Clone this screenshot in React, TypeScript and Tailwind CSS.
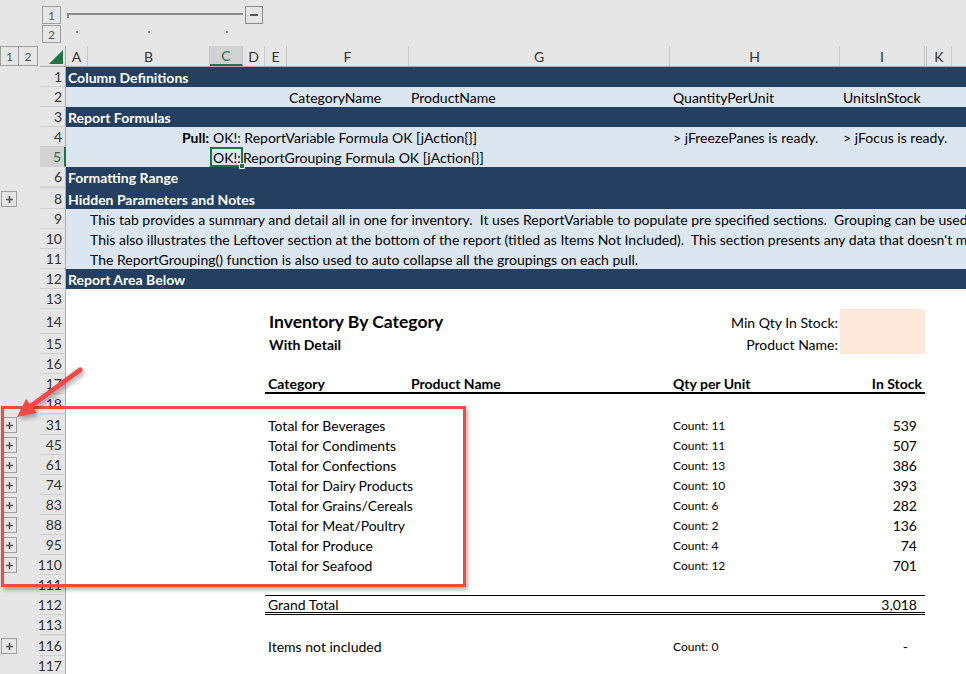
import type { ReactNode } from 'react'

// column tracks A..L (J is hidden, shown as a 2px sliver)
const COLS = 'grid grid-cols-[22px_122px_33px_22px_22px_122px_261px_170px_85px_2px_25px_14px]'

const DARK = 'bg-[#243f60]'
const LIGHT = 'bg-[#dce6f1]'

function PlusBox() {
  return (
    <div className="w-[16px] h-[16px] border border-[#9e9e9e] flex items-center justify-center text-[#555] leading-none">
      <svg width="9" height="9" viewBox="0 0 9 9"><path d="M4.5 1v7M1 4.5h7" stroke="#555" strokeWidth="1.6" /></svg>
    </div>
  )
}

type RowProps = { n: number; h?: string; bg?: string; plus?: boolean; sel?: boolean; children?: ReactNode }

function Row({ n, h = 'h-[20px]', bg = 'bg-white', plus, sel, children }: RowProps) {
  return (
    <div className={`flex ${h}`}>
      <div className="w-[40px] shrink-0 flex items-center pl-[1px]">{plus && <PlusBox />}</div>
      <div
        className={`w-[26px] shrink-0 flex items-center justify-end pr-[3px] border-b border-[#cfcfcf] text-[14px] ${
          sel ? 'bg-[#d2d2d2] text-[#217346] border-r-2 border-r-[#217346]' : 'text-[#333] border-r border-r-[#ababab]'
        }`}
      >
        {n}
      </div>
      <div className={`flex-1 ${COLS} grid-rows-1 ${bg}`}>{children}</div>
    </div>
  )
}

function Gap({ h, bg }: { h: string; bg: string }) {
  return (
    <div className={`flex ${h}`}>
      <div className="w-[40px] shrink-0" />
      <div className="w-[26px] shrink-0 border-r border-[#ababab] bg-[#d6d6d6]" />
      <div className={`flex-1 ${bg}`} />
    </div>
  )
}

function Section({ n, title, plus }: { n: number; title: string; plus?: boolean }) {
  return (
    <Row n={n} bg={DARK} plus={plus}>
      <div className="row-start-1 col-start-1 flex items-center pl-[2px] whitespace-nowrap font-bold text-white">{title}</div>
    </Row>
  )
}

const totals = [
  { n: 31, name: 'Beverages', count: 11, stock: '539' },
  { n: 45, name: 'Condiments', count: 11, stock: '507' },
  { n: 61, name: 'Confections', count: 13, stock: '386' },
  { n: 74, name: 'Dairy Products', count: 10, stock: '393' },
  { n: 83, name: 'Grains/Cereals', count: 6, stock: '282' },
  { n: 88, name: 'Meat/Poultry', count: 2, stock: '136' },
  { n: 95, name: 'Produce', count: 4, stock: '74' },
  { n: 110, name: 'Seafood', count: 12, stock: '701' },
]

const colHeads = ['A', 'B', 'C', 'D', 'E', 'F', 'G', 'H', 'I', '', 'K', '']

export default function App() {
  return (
    <div className="relative w-[966px] h-[674px] overflow-hidden bg-[#e6e6e6] text-[14px] leading-[17px] text-black [font-family:Lato,'Liberation_Sans',sans-serif]">
      {/* column outline levels */}
      <div className="flex h-[46px]">
        <div className="w-[42px] shrink-0" />
        <div className="w-[24px] shrink-0 flex flex-col gap-[1px] pt-[6px]">
          <div className="w-[19px] h-[18px] border border-[#9e9e9e] flex items-center justify-center text-[12px] text-[#555]">1</div>
          <div className="w-[19px] h-[18px] border border-[#9e9e9e] flex items-center justify-center text-[12px] text-[#555]">2</div>
        </div>
        <div className={`flex-1 ${COLS} grid-rows-[24px_22px]`}>
          <div className="row-start-1 col-start-1 col-span-3 pt-[13px] pl-[1px]">
            <div className="h-[5px] border-t-2 border-l-2 border-[#8a8a8a]" />
          </div>
          <div className="row-start-1 col-start-4 pt-[6px] pl-[2px]">
            <div className="w-[18px] h-[18px] border border-[#8a8a8a] flex items-center justify-center">
              <div className="w-[8px] h-[2px] bg-[#555]" />
            </div>
          </div>
          {[1, 2, 3].map((c) => (
            <div key={c} className={`row-start-2 ${c === 1 ? 'col-start-1' : c === 2 ? 'col-start-2' : 'col-start-3'} flex justify-center pt-[7px]`}>
              <div className="w-[2px] h-[2px] bg-[#8a8a8a]" />
            </div>
          ))}
        </div>
      </div>

      {/* column headers */}
      <div className="flex h-[21px]">
        <div className="w-[40px] shrink-0 flex">
          <div className="w-[19px] h-[20px] border border-[#9e9e9e] flex items-center justify-center text-[12px] text-[#555]">1</div>
          <div className="w-[19px] h-[20px] border border-[#9e9e9e] border-l-0 flex items-center justify-center text-[12px] text-[#555]">2</div>
        </div>
        <div className="w-[26px] shrink-0 border-b border-r border-[#ababab] flex items-end justify-end p-[2px]">
          <svg width="14" height="14" viewBox="0 0 14 14"><polygon points="14,0 14,14 0,14" fill="#217346" /></svg>
        </div>
        <div className={`flex-1 ${COLS} grid-rows-1 border-b border-[#ababab]`}>
          {colHeads.map((c, i) => (
            <div
              key={i}
              className={`row-start-1 flex items-center justify-center border-r border-[#c8c8c8] text-[14px] ${
                c === 'C' ? 'bg-[#d2d2d2] text-[#217346] border-b-2 border-b-[#217346]' : 'text-[#333]'
              } ${i === 11 ? 'border-r-0' : ''}`}
            >
              {c}
            </div>
          ))}
        </div>
      </div>

      <Section n={1} title="Column Definitions" />
      <Row n={2} bg={LIGHT}>
        <div className="row-start-1 col-start-6 flex items-center pl-[2px] whitespace-nowrap">CategoryName</div>
        <div className="row-start-1 col-start-7 flex items-center pl-[2px] whitespace-nowrap">ProductName</div>
        <div className="row-start-1 col-start-8 flex items-center pl-[3px] whitespace-nowrap">QuantityPerUnit</div>
        <div className="row-start-1 col-start-9 flex items-center pl-[3px] whitespace-nowrap">UnitsInStock</div>
      </Row>
      <Section n={3} title="Report Formulas" />
      <Row n={4} bg={LIGHT}>
        <div className="row-start-1 col-start-2 flex items-center justify-end pr-[1px] font-bold">Pull:</div>
        <div className="row-start-1 col-start-3 flex items-center pl-[3px] whitespace-nowrap">OK!: ReportVariable Formula OK [jAction{'{}'}]</div>
        <div className="row-start-1 col-start-8 flex items-center pl-[3px] whitespace-nowrap">&gt; jFreezePanes is ready.</div>
        <div className="row-start-1 col-start-9 flex items-center pl-[3px] whitespace-nowrap">&gt; jFocus is ready.</div>
      </Row>
      <Row n={5} bg={LIGHT} sel>
        <div className="relative row-start-1 col-start-3 flex items-center pl-[1px] whitespace-nowrap border-2 border-[#217346]">
          OK!:
          <div className="absolute -right-[4px] -bottom-[4px] w-[6px] h-[6px] bg-[#217346] border border-white" />
        </div>
        <div className="row-start-1 col-start-4 flex items-center whitespace-nowrap">ReportGrouping Formula OK [jAction{'{}'}]</div>
      </Row>
      <Section n={6} title="Formatting Range" />
      <Gap h="h-[2px]" bg={DARK} />
      <Section n={8} title="Hidden Parameters and Notes" plus />
      <Row n={9} bg={LIGHT}>
        <div className="row-start-1 col-start-2 flex items-center pl-[2px] whitespace-nowrap">
          This tab provides a summary and detail all in one for inventory.&nbsp; It uses ReportVariable to populate pre specified sections.&nbsp; Grouping can be used to hide details.
        </div>
      </Row>
      <Row n={10} bg={LIGHT}>
        <div className="row-start-1 col-start-2 flex items-center pl-[2px] whitespace-nowrap">
          This also illustrates the Leftover section at the bottom of the report (titled as Items Not Included).&nbsp; This section presents any data that doesn't match.
        </div>
      </Row>
      <Row n={11} bg={LIGHT}>
        <div className="row-start-1 col-start-2 flex items-center pl-[2px] whitespace-nowrap">
          The ReportGrouping() function is also used to auto collapse all the groupings on each pull.
        </div>
      </Row>
      <Section n={12} title="Report Area Below" />
      <Row n={13} />
      <Row n={14} h="h-[25px]">
        <div className="row-start-1 col-start-5 col-span-3 flex items-end pb-[2px] pl-[4px] whitespace-nowrap font-bold text-[17.5px] leading-[20px]">Inventory By Category</div>
        <div className="row-start-1 col-start-8 flex items-end justify-end pb-[3px] pr-[2px] whitespace-nowrap">Min Qty In Stock:</div>
        <div className="row-start-1 col-start-9 bg-[#fce9db]" />
      </Row>
      <Row n={15}>
        <div className="row-start-1 col-start-5 col-span-3 flex items-center pl-[4px] whitespace-nowrap font-bold">With Detail</div>
        <div className="row-start-1 col-start-8 flex items-center justify-end pr-[2px] whitespace-nowrap">Product Name:</div>
        <div className="row-start-1 col-start-9 bg-[#fce9db]" />
      </Row>
      <Row n={16} />
      <Row n={17}>
        <div className="row-start-1 col-start-5 col-span-2 flex items-center pl-[3px] whitespace-nowrap font-bold border-b-2 border-black">Category</div>
        <div className="row-start-1 col-start-7 flex items-center pl-[2px] whitespace-nowrap font-bold border-b-2 border-black">Product Name</div>
        <div className="row-start-1 col-start-8 flex items-center pl-[3px] whitespace-nowrap font-bold border-b-2 border-black">Qty per Unit</div>
        <div className="row-start-1 col-start-9 flex items-center justify-end pr-[3px] whitespace-nowrap font-bold border-b-2 border-black">In Stock</div>
      </Row>
      <Row n={18} />
      <Gap h="h-[1px]" bg="bg-white" />
      {totals.map((t) => (
        <Row key={t.n} n={t.n} plus>
          <div className="row-start-1 col-start-5 col-span-3 flex items-center pl-[3px] whitespace-nowrap">Total for {t.name}</div>
          <div className="row-start-1 col-start-8 flex items-center pl-[3px] whitespace-nowrap text-[12px]">Count: {t.count}</div>
          <div className="row-start-1 col-start-9 flex items-center justify-end pr-[8px]">{t.stock}</div>
        </Row>
      ))}
      <Row n={111} />
      <Row n={112}>
        <div className="row-start-1 col-start-5 col-span-5 flex items-center justify-between pl-[3px] pr-[8px] whitespace-nowrap border-t border-t-black border-b-[3px] border-b-black border-double">
          <span>Grand Total</span>
          <span>3,018</span>
        </div>
      </Row>
      <Row n={113} />
      <Gap h="h-[1px]" bg="bg-white" />
      <Row n={116} plus>
        <div className="row-start-1 col-start-5 col-span-3 flex items-center pl-[3px] whitespace-nowrap">Items not included</div>
        <div className="row-start-1 col-start-8 flex items-center pl-[3px] whitespace-nowrap text-[12px]">Count: 0</div>
        <div className="row-start-1 col-start-9 flex items-center justify-end pr-[17px]">-</div>
      </Row>
      <Row n={117} />

      {/* callout overlays */}
      <div className="absolute left-[1px] top-[406px] w-[465px] h-[181px] border-[3px] border-[#f24a4a] shadow-[2px_3px_4px_rgba(0,0,0,0.3)]" />
      <svg className="absolute left-0 top-[360px] drop-shadow-[2px_3px_2px_rgba(0,0,0,0.3)]" width="100" height="70" viewBox="0 0 100 70">
        <line x1="80" y1="10" x2="31" y2="46" stroke="#f24a4a" strokeWidth="5" strokeLinecap="round" />
        <polygon points="17,57 37,53 26,39" fill="#f24a4a" />
      </svg>
    </div>
  )
}
